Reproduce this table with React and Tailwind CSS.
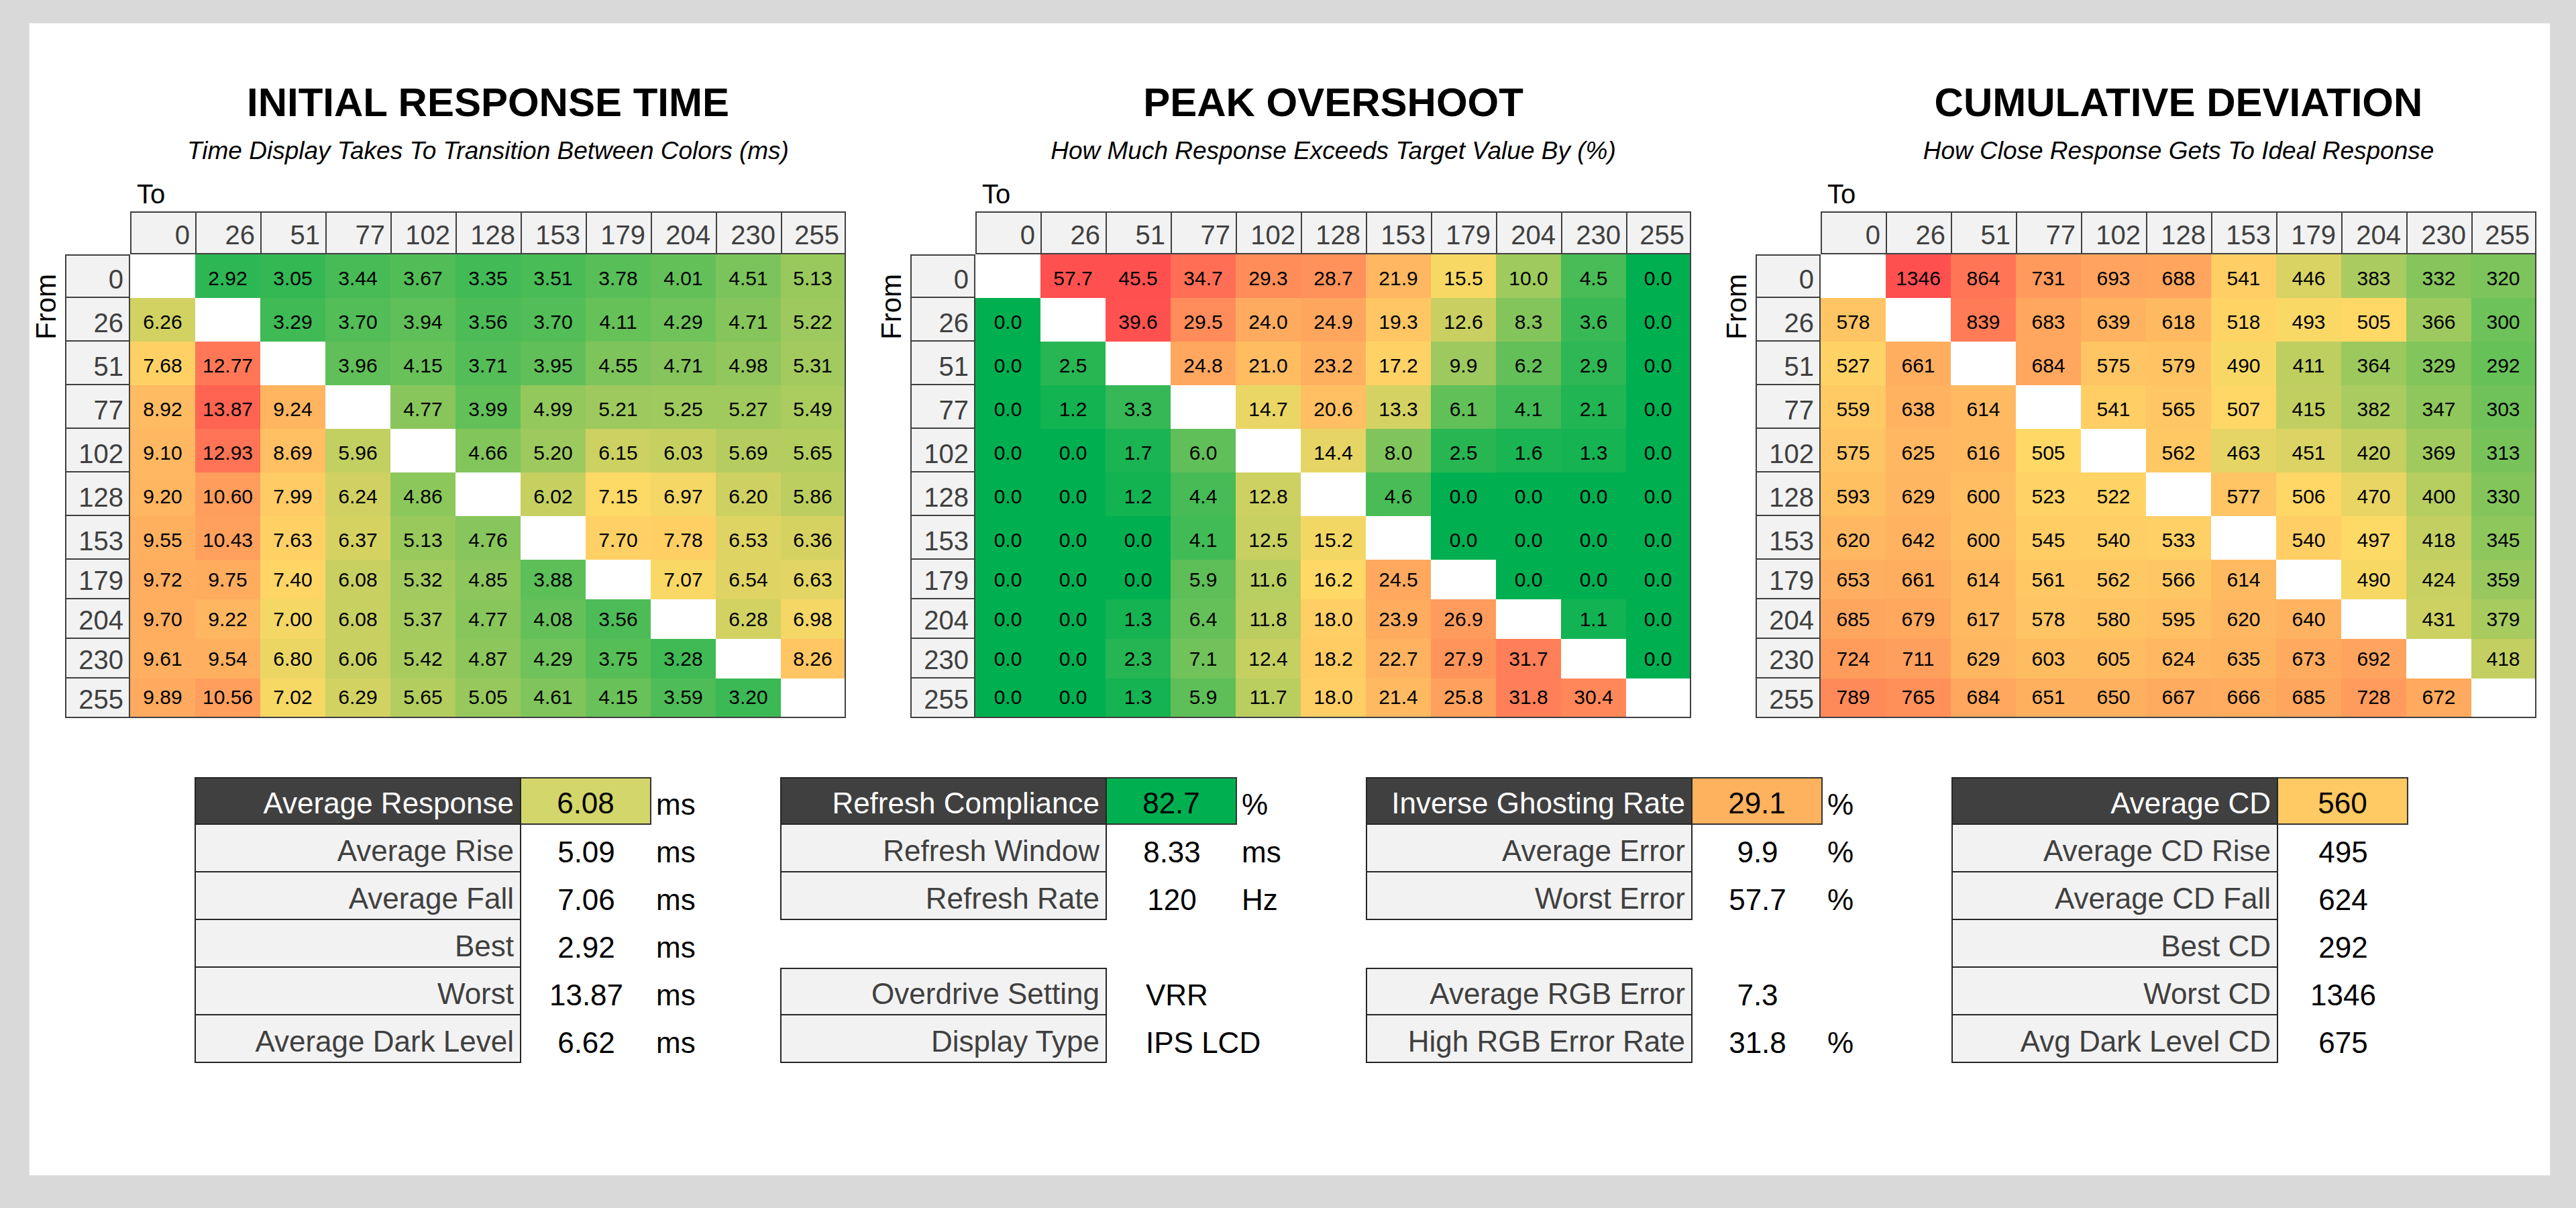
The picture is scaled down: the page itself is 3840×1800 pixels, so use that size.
import { Fragment } from "react";

const LEVELS = [0, 26, 51, 77, 102, 128, 153, 179, 204, 230, 255];

const GREEN = [0, 176, 80];
const YELLOW = [255, 217, 102];
const RED = [255, 80, 80];

// 3-colour scale, like the spreadsheet's conditional formatting
const scaleColor = (v, [min, mid, max]) => {
  let from = GREEN;
  let to = YELLOW;
  let t = (v - min) / (mid - min);
  if (v > mid) {
    from = YELLOW;
    to = RED;
    t = (v - mid) / (max - mid);
  }
  t = Math.max(0, Math.min(1, t));
  const c = from.map((x, i) => Math.round(x + (to[i] - x) * t));
  return `rgb(${c.join(",")})`;
};

const responseTimes = [
  [null, 2.92, 3.05, 3.44, 3.67, 3.35, 3.51, 3.78, 4.01, 4.51, 5.13],
  [6.26, null, 3.29, 3.7, 3.94, 3.56, 3.7, 4.11, 4.29, 4.71, 5.22],
  [7.68, 12.77, null, 3.96, 4.15, 3.71, 3.95, 4.55, 4.71, 4.98, 5.31],
  [8.92, 13.87, 9.24, null, 4.77, 3.99, 4.99, 5.21, 5.25, 5.27, 5.49],
  [9.1, 12.93, 8.69, 5.96, null, 4.66, 5.2, 6.15, 6.03, 5.69, 5.65],
  [9.2, 10.6, 7.99, 6.24, 4.86, null, 6.02, 7.15, 6.97, 6.2, 5.86],
  [9.55, 10.43, 7.63, 6.37, 5.13, 4.76, null, 7.7, 7.78, 6.53, 6.36],
  [9.72, 9.75, 7.4, 6.08, 5.32, 4.85, 3.88, null, 7.07, 6.54, 6.63],
  [9.7, 9.22, 7.0, 6.08, 5.37, 4.77, 4.08, 3.56, null, 6.28, 6.98],
  [9.61, 9.54, 6.8, 6.06, 5.42, 4.87, 4.29, 3.75, 3.28, null, 8.26],
  [9.89, 10.56, 7.02, 6.29, 5.65, 5.05, 4.61, 4.15, 3.59, 3.2, null],
];

const overshoot = [
  [null, 57.7, 45.5, 34.7, 29.3, 28.7, 21.9, 15.5, 10.0, 4.5, 0.0],
  [0.0, null, 39.6, 29.5, 24.0, 24.9, 19.3, 12.6, 8.3, 3.6, 0.0],
  [0.0, 2.5, null, 24.8, 21.0, 23.2, 17.2, 9.9, 6.2, 2.9, 0.0],
  [0.0, 1.2, 3.3, null, 14.7, 20.6, 13.3, 6.1, 4.1, 2.1, 0.0],
  [0.0, 0.0, 1.7, 6.0, null, 14.4, 8.0, 2.5, 1.6, 1.3, 0.0],
  [0.0, 0.0, 1.2, 4.4, 12.8, null, 4.6, 0.0, 0.0, 0.0, 0.0],
  [0.0, 0.0, 0.0, 4.1, 12.5, 15.2, null, 0.0, 0.0, 0.0, 0.0],
  [0.0, 0.0, 0.0, 5.9, 11.6, 16.2, 24.5, null, 0.0, 0.0, 0.0],
  [0.0, 0.0, 1.3, 6.4, 11.8, 18.0, 23.9, 26.9, null, 1.1, 0.0],
  [0.0, 0.0, 2.3, 7.1, 12.4, 18.2, 22.7, 27.9, 31.7, null, 0.0],
  [0.0, 0.0, 1.3, 5.9, 11.7, 18.0, 21.4, 25.8, 31.8, 30.4, null],
];

const deviation = [
  [null, 1346, 864, 731, 693, 688, 541, 446, 383, 332, 320],
  [578, null, 839, 683, 639, 618, 518, 493, 505, 366, 300],
  [527, 661, null, 684, 575, 579, 490, 411, 364, 329, 292],
  [559, 638, 614, null, 541, 565, 507, 415, 382, 347, 303],
  [575, 625, 616, 505, null, 562, 463, 451, 420, 369, 313],
  [593, 629, 600, 523, 522, null, 577, 506, 470, 400, 330],
  [620, 642, 600, 545, 540, 533, null, 540, 497, 418, 345],
  [653, 661, 614, 561, 562, 566, 614, null, 490, 424, 359],
  [685, 679, 617, 578, 580, 595, 620, 640, null, 431, 379],
  [724, 711, 629, 603, 605, 624, 635, 673, 692, null, 418],
  [789, 765, 684, 651, 650, 667, 666, 685, 728, 672, null],
];

const tables = [
  {
    title: "INITIAL RESPONSE TIME",
    subtitle: "Time Display Takes To Transition Between Colors (ms)",
    data: responseTimes,
    fmt: (v) => v.toFixed(2),
    scale: [2, 7.2, 15],
  },
  {
    title: "PEAK OVERSHOOT",
    subtitle: "How Much Response Exceeds Target Value By (%)",
    data: overshoot,
    fmt: (v) => v.toFixed(1),
    scale: [0, 16, 40],
  },
  {
    title: "CUMULATIVE DEVIATION",
    subtitle: "How Close Response Gets To Ideal Response",
    data: deviation,
    fmt: (v) => String(v),
    scale: [150, 500, 1000],
  },
];

const statGroups = [
  [
    { label: "Average Response", value: "6.08", unit: "ms", head: "bg-[#d3d66b]" },
    { label: "Average Rise", value: "5.09", unit: "ms" },
    { label: "Average Fall", value: "7.06", unit: "ms" },
    { label: "Best", value: "2.92", unit: "ms" },
    { label: "Worst", value: "13.87", unit: "ms" },
    { label: "Average Dark Level", value: "6.62", unit: "ms" },
  ],
  [
    { label: "Refresh Compliance", value: "82.7", unit: "%", head: "bg-[#00b050]" },
    { label: "Refresh Window", value: "8.33", unit: "ms" },
    { label: "Refresh Rate", value: "120", unit: "Hz" },
    null,
    { label: "Overdrive Setting", value: "VRR", text: true },
    { label: "Display Type", value: "IPS LCD", text: true },
  ],
  [
    { label: "Inverse Ghosting Rate", value: "29.1", unit: "%", head: "bg-[#ffb25e]" },
    { label: "Average Error", value: "9.9", unit: "%" },
    { label: "Worst Error", value: "57.7", unit: "%" },
    null,
    { label: "Average RGB Error", value: "7.3" },
    { label: "High RGB Error Rate", value: "31.8", unit: "%" },
  ],
  [
    { label: "Average CD", value: "560", head: "bg-[#ffc964]" },
    { label: "Average CD Rise", value: "495" },
    { label: "Average CD Fall", value: "624" },
    { label: "Best CD", value: "292" },
    { label: "Worst CD", value: "1346" },
    { label: "Avg Dark Level CD", value: "675" },
  ],
];

const Matrix = ({ data, fmt, scale }) => (
  <div className="grid grid-cols-[repeat(12,97px)] grid-rows-[64px_repeat(7,65px)_repeat(4,59px)]">
    <div />
    {LEVELS.map((level, i) => (
      <div
        key={level}
        className={`flex items-end justify-end border-t-2 border-b-2 border-l-2 border-[#404040] bg-[#f2f2f2] pr-[8px] pb-[7px] text-[40px] leading-none text-[#404040] ${
          i === 10 ? "border-r-2" : ""
        }`}
      >
        {level}
      </div>
    ))}
    {data.map((row, r) => (
      <Fragment key={r}>
        <div
          className={`flex items-end justify-end border-x-2 border-b-2 border-[#404040] bg-[#f2f2f2] pr-[8px] pb-[6px] text-[40px] leading-none text-[#404040] ${
            r === 0 ? "border-t-2" : ""
          }`}
        >
          {LEVELS[r]}
        </div>
        {row.map((v, c) => (
          <div
            key={c}
            style={{ backgroundColor: v === null ? "#ffffff" : scaleColor(v, scale) }}
            className={`flex items-end justify-center border-[#404040] pb-[14px] text-[30px] leading-none text-black ${
              c === 10 ? "border-r-2" : ""
            } ${r === 10 ? "border-b-2" : ""}`}
          >
            {v === null ? "" : fmt(v)}
          </div>
        ))}
      </Fragment>
    ))}
  </div>
);

const Block = ({ title, subtitle, data, fmt, scale }) => (
  <div className="flex w-[1207px] flex-col">
    <div className="ml-[140px] w-[1067px] text-center text-[60px] font-bold leading-none text-black">
      {title}
    </div>
    <div className="ml-[140px] mt-[23px] w-[1067px] whitespace-nowrap text-center text-[37px] italic leading-none text-black">
      {subtitle}
    </div>
    <div className="ml-[150px] mt-[26px] text-[40px] leading-none text-black">To</div>
    <div className="mt-[6px] flex">
      <div className="w-[43px] pt-[93px]">
        <div className="-ml-[6px] rotate-180 text-[42px] leading-none text-black [writing-mode:vertical-rl]">
          From
        </div>
      </div>
      <Matrix data={data} fmt={fmt} scale={scale} />
    </div>
  </div>
);

const StatGroup = ({ rows }) => (
  <div className="flex w-[873px] flex-col text-[44px] leading-none">
    {rows.map((row, i) => {
      if (!row) return <div key={i} className="h-[71px]" />;
      const first = i === 0 || !rows[i - 1];
      return (
        <div key={i} className="flex h-[71px]">
          <div
            className={`flex w-[487px] items-end justify-end whitespace-nowrap border-x-2 border-b-2 border-[#262626] pr-[9px] pb-[8px] ${
              first ? "border-t-2" : ""
            } ${row.head ? "bg-[#404040] text-white" : "bg-[#f2f2f2] text-[#404040]"}`}
          >
            {row.label}
          </div>
          <div
            className={`flex w-[194px] shrink-0 items-end whitespace-nowrap pb-[8px] text-black ${
              row.head ? `${row.head} border-y-2 border-r-2 border-[#333333]` : ""
            } ${row.text ? "justify-start pl-[58px]" : "justify-center"}`}
          >
            {row.value}
          </div>
          <div className="flex items-end whitespace-nowrap pb-[8px] pl-[7px] text-black">{row.unit}</div>
        </div>
      );
    })}
  </div>
);

export default function App() {
  return (
    <div className="h-[1800px] w-[3840px] bg-[#d9d9d9] pl-[43px] pt-[34px] font-['Liberation_Sans',Arial,sans-serif]">
      <div className="h-[1718px] w-[3759px] border border-[#e4e4e4] bg-white pl-[10px] pt-[88px]">
        {/* Matrices */}
        <div className="flex gap-[53px]">
          {tables.map((t) => (
            <Block key={t.title} {...t} />
          ))}
        </div>

        {/* Summary boxes */}
        <div className="ml-[236px] mt-[88px] flex">
          {statGroups.map((rows, i) => (
            <StatGroup key={i} rows={rows} />
          ))}
        </div>
      </div>
    </div>
  );
}
